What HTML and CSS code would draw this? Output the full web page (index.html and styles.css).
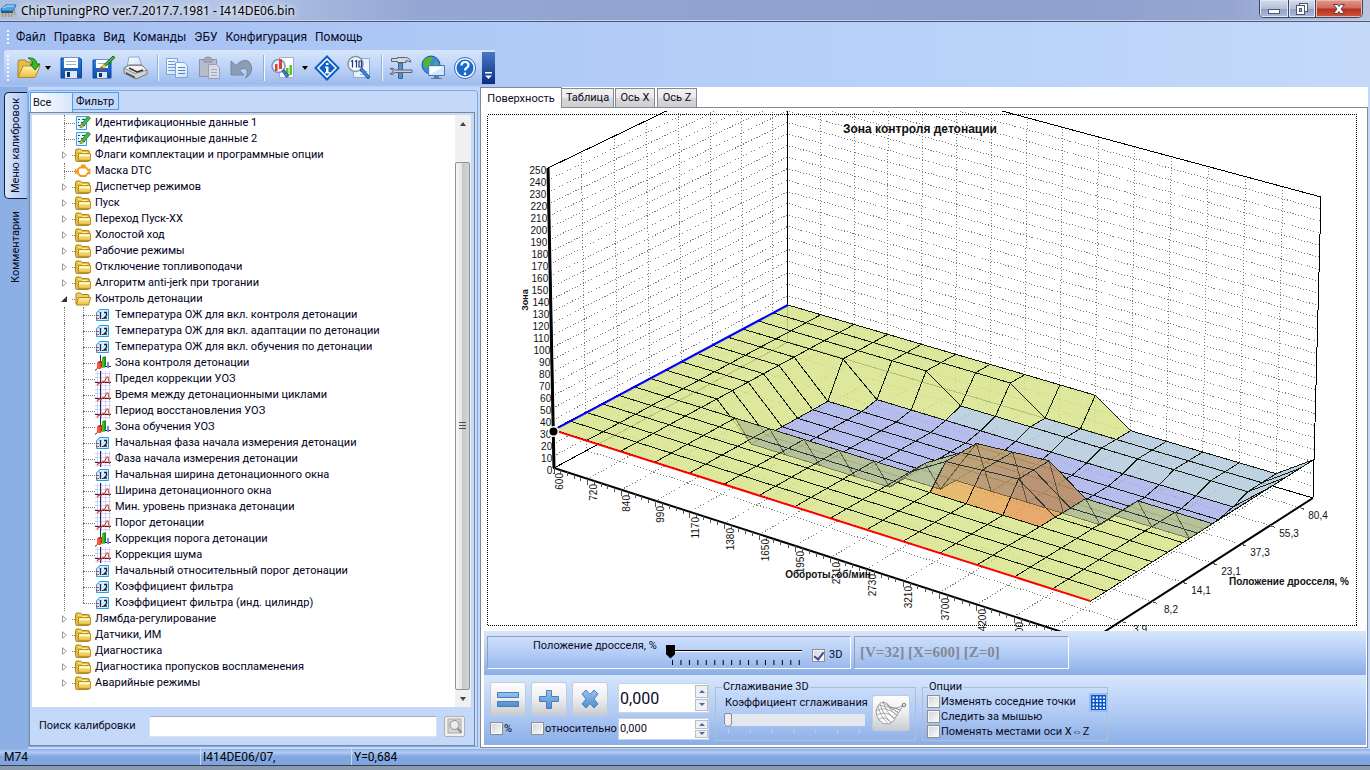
FILE: index.html
```html
<!DOCTYPE html>
<html lang="ru">
<head>
<meta charset="utf-8">
<title>ChipTuningPRO</title>
<link rel="stylesheet" href="styles.css">
</head>
<body>
<svg class="sprite" aria-hidden="true">
  <defs>
    <linearGradient id="gFold" x1="0" y1="0" x2="0" y2="1"><stop offset="0" stop-color="#fff6b4"/><stop offset="1" stop-color="#e9bd3c"/></linearGradient>
    <linearGradient id="gBlue" x1="0" y1="0" x2="0" y2="1"><stop offset="0" stop-color="#2f7fe0"/><stop offset="1" stop-color="#0b4ca8"/></linearGradient>
    <linearGradient id="gOp" x1="0" y1="0" x2="0" y2="1"><stop offset="0" stop-color="#9cc3ec"/><stop offset="1" stop-color="#4d8cd0"/></linearGradient>
    <linearGradient id="gPage" x1="0" y1="0" x2="1" y2="1"><stop offset="0" stop-color="#ffffff"/><stop offset="1" stop-color="#c9dcf6"/></linearGradient>
  </defs>
  <symbol id="folder" viewBox="0 0 16 16">
    <path d="M.5 12.500V3.500q0-1.500 1.500-1.500h3.500l1.500 1.500h6q1.500 0 1.500 1.500v8q0 1.500-1.500 1.500h-11q-1.500 0-1.500-2z" fill="#e3bc3a" stroke="#b18a1c"/>
    <path d="M2.500 4h3l1.500 1.500h5.500" fill="none" stroke="#fff3a0"/>
    <path d="M3.500 6.500h12v7h-12z" fill="url(#gFold)" stroke="#b8922a"/>
    <path d="M4.500 8.500h10" stroke="#fffbe0"/>
  </symbol>
  <symbol id="folder-open" viewBox="0 0 16 16">
    <path d="M1 13V3.500q0-1.500 1.500-1.500h3l1.500 1.500h6q1 0 1 1.500v3" fill="#f0cf62" stroke="#a67c10"/>
    <path d="M3.500 6.500h12l-2 7.500h-12z" fill="url(#gFold)" stroke="#b08a18"/>
  </symbol>
  <symbol id="num" viewBox="0 0 16 16">
    <path d="M4.500 2.500h9v11h-12v-8z" fill="#d8efff" stroke="#2b9bea"/>
    <path d="M1.500 5.500l3-3v3z" fill="#7cc4f5"/>
    <path d="M1 8.500h3M1 11.500h3" stroke="#e23b22"/>
    <path d="M5.500 5v7M9 5.500h2.500v3l-2.500 2.500h3" fill="none" stroke="#10263c" stroke-width="1.300"/>
    <path d="M7 11h1v1h-1z" fill="#10263c"/>
  </symbol>
  <symbol id="curve" viewBox="0 0 16 16">
    <path d="M2.500 0v16M6.500 0v16M10.500 0v16M14.500 0v16M0 2.500h16M0 6.500h16M0 10.500h16M0 14.500h16" stroke="#d0d2f8"/>
    <path d="M5.500 0v16M0 11.500h16" stroke="#20225c"/>
    <path d="M2 14l2-2 2 1 2-3 1.500 1 2-5h1.500l1.500 7" fill="none" stroke="#ee4a2a" stroke-width="1.200"/>
  </symbol>
  <symbol id="bars" viewBox="0 0 16 16">
    <path d="M5.500 0v11L0 15.500M5 11.500h11" fill="none" stroke="#20225c"/>
    <path d="M2 8l2-2h3v6l-1.500 2H2z" fill="#c82a12"/><path d="M2 8h3.500v6H2z" fill="#f4583a"/>
    <path d="M7 3l1.500-1.500H11V11l-1.500 1.500H7z" fill="#138a1c"/><path d="M7 3h2.500v9.500H7z" fill="#35c22e"/>
    <path d="M12 7h2v6h-2z" fill="#8488d8"/>
  </symbol>
  <symbol id="ident" viewBox="0 0 16 16">
    <path d="M1.500 1.500h10v13h-10z" fill="#e6f4ff" stroke="#3ba0ea"/>
    <path d="M3 4.500h2M7 4.500h3M3 7.500h1M6 7.500h3M3 10.500h3M8 10.500h2" stroke="#1e4a72"/>
    <path d="M5 12.500l1-3 7-8.500 2.500 2-7 8.500z" fill="#48b83a" stroke="#19761a" stroke-width=".7"/><path d="M5 12.500l1-3 2.500 2z" fill="#ffd765" stroke="#8a6a20" stroke-width=".5"/>
  </symbol>
  <symbol id="engine" viewBox="0 0 16 16">
    <path d="M3 6l2-1.500h6L13 7h1.500V5.500M14.500 5.500v6M14.500 10H13l-2.500 3h-5L3 10.500M3 5.500v6M.8 6v5M.8 8.500H3M6 2.500h4.500M8 2.500v2" fill="none" stroke="#f59a1c" stroke-width="1.800"/>
  </symbol>
</svg>

<div class="app">
  <header class="titlebar">
    <svg class="app-icon" width="17" height="17" viewBox="0 0 17 17"><path d="M1 7l5-4h10l-3 6H1z" fill="#4da6e4" stroke="#2370b4"/><path d="M3 6l4-2h7" stroke="#c6e8fb" fill="none"/><path d="M1 9h12v2H1z" fill="#1f5a8c"/><path d="M2.500 11v4M5.500 11v4M8.500 11v4M11.500 11v4M14.500 8v5" stroke="#b39a52" stroke-width="1.500"/></svg>
    <h1 class="title">ChipTuningPRO ver.7.2017.7.1981 - I414DE06.bin</h1>
    <div class="winbtns">
      <button class="wb" aria-label="Свернуть"><svg width="14" height="14" viewBox="0 0 14 14"><rect x="1.500" y="7.500" width="11" height="4" fill="#fff" stroke="#4b5670"/></svg></button>
      <button class="wb" aria-label="Развернуть"><svg width="14" height="14" viewBox="0 0 14 14"><rect x="4.500" y="1.500" width="8" height="8" fill="#fff" stroke="#4b5670"/><rect x="1.500" y="3.500" width="8" height="9" fill="#fff" stroke="#4b5670"/><rect x="4.500" y="6.500" width="2" height="3" fill="#b9c6e0" stroke="#4b5670"/></svg></button>
      <button class="wb close" aria-label="Закрыть"><svg width="14" height="14" viewBox="0 0 14 14"><path d="M1.500 2.500h4L7 4.500l1.500-2h4L9 7l3.500 4.500h-4L7 9.500l-1.500 2h-4L5 7z" fill="#fff" stroke="#5a3a4a"/></svg></button>
    </div>
  </header>

  <nav class="menubar">
    <span class="grip"></span>
    <button>Файл</button><button>Правка</button><button>Вид</button><button>Команды</button><button>ЭБУ</button><button>Конфигурация</button><button>Помощь</button>
  </nav>

  <div class="toolrow">
    <div class="toolbar">
      <span class="grip tall"></span>
      <button class="tb drop" aria-label="Открыть"><svg width="26" height="26" viewBox="0 0 26 26"><path d="M2 22V7q0-2 2-2h5l2 2h8v5" fill="#e6bd4c" stroke="#a9801f"/><path d="M2 22.500L7 11h17l-5 11.500z" fill="url(#gFold)" stroke="#b08a28"/><path d="M12 3q8-1 9 6h3l-5 6-5-6h3q0-4-5-6z" fill="#3fb52f" stroke="#1b7a1b"/></svg></button>
      <i class="arrow"></i>
      <button class="tb" aria-label="Сохранить"><svg width="26" height="26" viewBox="0 0 26 26"><path d="M3 3h19l1.500 1.500V23H3z" fill="url(#gBlue)" stroke="#0d4a9b"/><path d="M6 3h14v10H6z" fill="#fff"/><path d="M8 6.500h10M8 9.500h10" stroke="#8fb2de"/><path d="M7 16h12v7H7z" fill="#dde6f2"/><path d="M9 17h3v5H9z" fill="#13305c"/></svg></button>
      <button class="tb" aria-label="Сохранить как"><svg width="26" height="26" viewBox="0 0 26 26"><path d="M3 5h18v18H3z" fill="url(#gBlue)" stroke="#0d4a9b"/><path d="M6 5h12v8H6z" fill="#fff"/><path d="M8 8.500h7" stroke="#8fb2de"/><path d="M7 17h10v6H7z" fill="#dde6f2"/><path d="M9 18h3v4H9z" fill="#13305c"/><path d="M11 14l3-1L25 2.500 23 1 12 11.500z" fill="#46b52f" stroke="#1b6b18"/><path d="M9.500 15.500l1-4 3 2.500z" fill="#e8372a"/><path d="M12 11.500l2 2 2-2-2-2z" fill="#f3d24a"/></svg></button>
      <button class="tb" aria-label="Печать"><svg width="26" height="26" viewBox="0 0 26 26"><path d="M5 12L7 2h10l3 9z" fill="url(#gPage)" stroke="#86a9d6"/><path d="M2 13l5-3h13l5 5v4l-11 5L2 18z" fill="#d4d4d4" stroke="#777"/><path d="M2 13l11 5.500L25 15l-5-4.500H7z" fill="#f4f4f4" stroke="#888"/><path d="M7 13l8 4 6-2" stroke="#333" stroke-width="1.500" fill="none"/><path d="M4 17l9 4.500v2L4 19z" fill="#555"/></svg></button>
      <span class="sep"></span>
      <button class="tb" aria-label="Копировать"><svg width="26" height="26" viewBox="0 0 26 26"><path d="M2.500 3.500h11v16h-11z" fill="url(#gPage)" stroke="#7ea5da"/><path d="M4 6.500h7M4 9.500h7M4 12.500h7M4 15.500h7" stroke="#6b98d6"/><path d="M11.500 7.500h9l3 3v12h-12z" fill="url(#gPage)" stroke="#7ea5da"/><path d="M14 12.500h7M14 15.500h7M14 18.500h7" stroke="#5287d0"/></svg></button>
      <button class="tb" aria-label="Вставить"><svg width="26" height="26" viewBox="0 0 26 26"><path d="M3.500 4.500h17v17h-17z" fill="#b5bccb" stroke="#8c95a8"/><path d="M8 5q0-3 4-3t4 3v2H8z" fill="#a1a9b9" stroke="#8c95a8"/><path d="M12.500 9.500h8l3 3v11h-11z" fill="#d6dbe6" stroke="#98a1b4"/><path d="M15 14.500h6M15 17.500h6M15 20.500h6" stroke="#a3abbc"/></svg></button>
      <button class="tb" aria-label="Отменить"><svg width="26" height="26" viewBox="0 0 26 26"><path d="M3 6v14h13l-4.500-4.500q5-4 7.500-.500 1.500 4-1.500 8 7-4 6-11Q21.500 3 14 6q-3 1-6 4.500z" fill="#8d9cb5" stroke="#78869f"/></svg></button>
      <span class="sep"></span>
      <button class="tb" aria-label="Диаграммы"><svg width="26" height="26" viewBox="0 0 26 26"><path d="M9.500 2.500h14v20h-14z" fill="#fff" stroke="#9ab0d4"/><path d="M16 13h2.500v7H16zM19.500 10H22v10h-2.500z" fill="#54c51d"/><circle cx="8.500" cy="11" r="6.500" fill="#e2f1fd" stroke="#7d98bc" stroke-width="1.500"/><path d="M5 9h2.500v7H5zM9 4h3v10H9z" fill="#e2412b"/><path d="M12 16l2-1.500 5 6-2.500 2z" fill="#4b79bd" stroke="#2e548e"/></svg></button>
      <i class="arrow wide"></i>
      <button class="tb" aria-label="Информация"><svg width="26" height="26" viewBox="0 0 26 26"><path d="M13 1.500L24.500 13 13 24.500 1.500 13z" fill="#fff" stroke="#0e5fc0" stroke-width="2"/><path d="M13 5l8 8-8 8-8-8z" fill="#0b62c8"/><path d="M12 8h2.500v2H12zM11 11.500h3.500V17H16v1.500h-5V17h1v-4h-1z" fill="#fff"/></svg></button>
      <button class="tb" aria-label="Поиск"><svg width="26" height="26" viewBox="0 0 26 26"><path d="M7.500 3.500h16v19h-16z" fill="#e9f1fc" stroke="#8ba8d4"/><path d="M14 16.500h7M14 19.500h7" stroke="#9cb7dd"/><circle cx="9.500" cy="9" r="7.500" fill="#f4f9ff" stroke="#8a94a6" stroke-width="1.500"/><path d="M5 6.500l1.500-1v7M9 6.500l1.500-1v7M13 6h2.500v6H13z" fill="none" stroke="#1c3c78" stroke-width="1.200"/><path d="M14 15l2-2 8 9-2 2z" fill="#3d87de" stroke="#1d5aa8"/></svg></button>
      <span class="sep"></span>
      <button class="tb" aria-label="Инструменты"><svg width="26" height="26" viewBox="0 0 26 26"><path d="M3.500 3.500h6v-1h8q4 0 5.500 4.500l-5-1.500v2h-8.500v-1h-6z" fill="#d4d8de" stroke="#5a6270"/><path d="M10.500 8h4v15.500h-4z" fill="#5a8fca" stroke="#3a6494"/><path d="M2 13.500q3.500-1.500 5 1.500h17v2.500H7q-1.500 3-5 1.500l3-1.500V15z" fill="#c8cdd6" stroke="#5a6270"/></svg></button>
      <button class="tb" aria-label="Сеть"><svg width="26" height="26" viewBox="0 0 26 26"><circle cx="11" cy="10" r="9" fill="#3a8be0" stroke="#1b5ca8"/><path d="M5 4q6-4 8 0l-3 3 1 3-5 3-3-4zM15 6l4 4-2 5-3-3z" fill="#55b829"/><path d="M8.500 10.500h16v10h-16z" fill="#cfe8fd" stroke="#4b7db8"/><path d="M10 12h13L10 19z" fill="#fff"/><path d="M14 21h5v2h3v1H11v-1h3z" fill="#5a7ca8"/></svg></button>
      <button class="tb" aria-label="Справка"><svg width="26" height="26" viewBox="0 0 26 26"><circle cx="13" cy="13" r="10.500" fill="#fff" stroke="#2a69b8"/><circle cx="13" cy="13" r="8.500" fill="#1c68cf"/><path d="M9.500 10.500q0-3.500 3.500-3.500t3.500 3q0 2-2 3-1.500 1-1.500 2.500M13 17.500v2.500" fill="none" stroke="#fff" stroke-width="2.200"/></svg></button>
      <button class="overflow" aria-label="Ещё"><svg width="9" height="9" viewBox="0 0 9 9"><path d="M1 1h7v1.500H1z" fill="#fff"/><path d="M1 4.500h7L4.500 8z" fill="#fff"/></svg></button>
    </div>
  </div>

  <main class="main">
    <div class="vtabs">
      <button class="vtab active">Меню калибровок</button>
      <button class="vtab">Комментарии</button>
    </div>

    <section class="left">
      <div class="ltabs"><button class="ltab active">Все</button><button class="ltab">Фильтр</button></div>
      <div class="lbody">
        <div class="treebox">
          <ul class="tree" id="tree"></ul>
          <div class="scroll">
            <button class="sbtn" aria-label="Вверх"><i class="up"></i></button>
            <div class="sgap"></div>
            <div class="thumb"><i></i></div>
            <button class="sbtn low" aria-label="Вниз"><i class="down"></i></button>
          </div>
        </div>
        <div class="search">
          <label for="q">Поиск калибровки</label>
          <input id="q" type="text">
          <button aria-label="Найти"><svg width="16" height="16" viewBox="0 0 16 16"><rect x="1" y="1" width="13" height="14" fill="#d6d6d6" stroke="#aaa"/><circle cx="7.500" cy="7" r="4.500" fill="#ececec" stroke="#8d8d8d"/><path d="M10.500 10.500l4 4" stroke="#8d8d8d" stroke-width="2"/></svg></button>
        </div>
      </div>
    </section>

    <section class="right">
      <div class="rtabs"><button class="rtab active">Поверхность</button><button class="rtab">Таблица</button><button class="rtab">Ось X</button><button class="rtab">Ось Z</button></div>
      <div class="rbody">
        <div class="chart"><svg id="chart" viewBox="484 111 878 520" preserveAspectRatio="xMinYMin meet"></svg></div>
        <div class="bar1">
          <div class="well throttle">
            <label for="thr">Положение дросселя, %</label>
            <div class="slider">
              <input id="thr" type="range" min="0" max="15" value="0">
              <svg width="132" height="5" viewBox="0 0 132 5"><path d="M1 2.500h131" stroke="#000" stroke-width="5" stroke-dasharray="1 7.450"/></svg>
            </div>
            <label class="chk"><input type="checkbox" checked>3D</label>
          </div>
          <div class="well readout">[V=32] [X=600] [Z=0]</div>
        </div>
        <div class="bar2">
          <div class="ops">
            <div class="opbtns">
              <button class="op" aria-label="Присвоить"><svg width="24" height="24" viewBox="0 0 24 24"><path d="M1.500 5.500h21v5h-21zM1.500 14.500h21v5h-21z" fill="url(#gOp)" stroke="#4c7fb8"/></svg></button>
              <button class="op" aria-label="Прибавить"><svg width="24" height="24" viewBox="0 0 24 24"><path d="M9.500 3.500h5v6h7v5h-7v7h-5v-7h-7v-5h7z" fill="url(#gOp)" stroke="#4c7fb8"/></svg></button>
              <button class="op" aria-label="Умножить"><svg width="24" height="24" viewBox="0 0 24 24"><path d="M4 7l4-4 4 4.500L16 3l4 4-4 5 4 5-4 4-4-4.500L8 21l-4-4 4-5z" fill="url(#gOp)" stroke="#4c7fb8"/></svg></button>
            </div>
            <div class="opchk"><label class="chk pc"><input type="checkbox">%</label><label class="chk"><input type="checkbox">относительно</label></div>
          </div>
          <div class="spins">
            <div class="spin big"><input type="text" value="0,000" aria-label="Значение"><span class="ud"><button aria-label="Больше"><i class="up"></i></button><button aria-label="Меньше"><i class="down"></i></button></span></div>
            <div class="spin"><input type="text" value="0,000" aria-label="Шаг"><span class="ud"><button aria-label="Больше"><i class="up"></i></button><button aria-label="Меньше"><i class="down"></i></button></span></div>
          </div>
          <fieldset class="smooth">
            <legend>Сглаживание 3D</legend>
            <div class="smoothcol">
              <label for="sm">Коэффициент сглаживания</label>
              <input id="sm" type="range" min="0" max="6" value="0">
              <svg width="140" height="4" viewBox="0 0 140 4"><path d="M4 2h136" stroke="#c3cde0" stroke-width="4" stroke-dasharray="1 20.800"/></svg>
            </div>
            <button class="op tall" aria-label="Сгладить"><svg width="34" height="26" viewBox="0 0 34 26"><path d="M2 11q2-8 7-9 4 0 7 5 7 3 13-2-3 6-6 10-3 7-8 9-6 1-10-4-3-4-3-9z" fill="#fff" stroke="#777" stroke-width=".7"/><path d="M4 6q2 10 10 17.500M6 3.500q2 10 11 19M9 2q3 10 11 17M13 3.500q4 7 9 12M17 7q3 3 7 6M22 8q2 2 4 2M2 11q9-6 21 4M3 15q8-5 18 3M5 19q6-4 12 4M5 5q9 1 19 7M8 2.500q8 6 18 7" fill="none" stroke="#888" stroke-width=".7"/><circle cx="30" cy="5" r="1.800" fill="#ddd" stroke="#666" stroke-width=".8"/></svg></button>
          </fieldset>
          <fieldset class="opts">
            <legend>Опции</legend>
            <div class="optcol">
              <label class="chk"><input type="checkbox">Изменять соседние точки</label>
              <label class="chk"><input type="checkbox">Следить за мышью</label>
              <label class="chk"><input type="checkbox">Поменять местами оси X⇔Z</label>
            </div>
            <button class="gridbtn" aria-label="Сетка"><svg width="15" height="15" viewBox="0 0 15 15"><path d="M0 0h15v15H0z" fill="#0a55c4"/><path d="M1.500 1.500h2v2h-2zM5 1.500h2v2H5zM8.500 1.500h2v2h-2zM12 1.500h2v2h-2zM1.500 5h2v2h-2zM5 5h2v2H5zM8.500 5h2v2h-2zM12 5h2v2h-2zM1.500 8.500h2v2h-2zM5 8.500h2v2H5zM8.500 8.500h2v2h-2zM12 8.500h2v2h-2zM1.500 12h2v2h-2zM5 12h2v2H5zM8.500 12h2v2h-2zM12 12h2v2h-2z" fill="#e8f2ff"/></svg></button>
          </fieldset>
        </div>
      </div>
    </section>
  </main>

  <footer class="status"><span class="cell c1">M74</span><span class="cell c2">I414DE06/07,</span><span class="cell c3">Y=0,684</span></footer>
  <div class="taskedge"></div>
</div>
<script src="app.js"></script>
</body>
</html>
```

FILE: styles.css
```css
* { box-sizing: border-box; }
html, body { height: 100%; margin: 0; }
body {
  font: 11px/16px Roboto, "Noto Sans", sans-serif;
  color: #0a0a1e;
  background: #8cafe6;
  overflow: hidden;
}
button, input { font: inherit; color: inherit; padding: 0; margin: 0; border: 0; background: none; }
ul { list-style: none; margin: 0; padding: 0; }
.sprite { position: absolute; width: 0; height: 0; }
.app { display: flex; flex-direction: column; height: 100vh; }

.titlebar {
  display: flex; align-items: center; height: 22px; flex: none;
  background: linear-gradient(90deg, #aebfe2 0, #b4c4e6 230px, #94a6d3 420px, #8f9fce 75%, #96a6d2 90%, #b9c6e0);
  border-bottom: 1px solid #4c5878;
  box-shadow: inset 0 -1px #c7d3ec;
}
.app-icon { margin-right: 4px; }
.title { margin: 0; font: 12px/16px "Noto Sans", sans-serif; color: #000; flex: 1; text-shadow: 0 0 6px #fff, 0 0 8px #fff; }
.winbtns { display: flex; align-self: flex-start; height: 18px; margin-right: 7px; border: 1px solid #3d4864; border-top: 0; border-radius: 0 0 5px 5px; overflow: hidden; }
.wb { display: flex; align-items: center; justify-content: center; width: 28px; background: linear-gradient(#d5dcec, #b4bfd9 50%, #909fc5 52%, #aebbd9); box-shadow: inset 0 0 0 1px #dfe6f4; }
.wb + .wb { border-left: 1px solid #3d4864; width: 27px; }
.wb.close { width: 47px; background: linear-gradient(#dd9a8f, #cf6a58 48%, #b3301c 52%, #d4563a); box-shadow: inset 0 0 0 1px #e9b7a8; }

.menubar, .toolrow { background: linear-gradient(90deg, #a4c0f3, #b6d0f8 60%, #c4d9fa); }
.menubar { display: flex; align-items: center; gap: 8px; height: 28px; flex: none; padding: 2px 0 0 7px; font-size: 12px; }
.grip { width: 2px; height: 14px; margin-right: -1px; background: repeating-linear-gradient(#f4f8ff 0 2px, transparent 2px 4px); }
.grip.tall { height: 26px; margin-right: 5px; }
.toolrow { height: 37px; flex: none; padding-left: 4px; }
.toolbar { display: flex; align-items: center; width: 491px; height: 35px; padding-left: 3px; border-radius: 3px 0 0 3px; background: linear-gradient(#d8e6fc, #bcd2f7 50%, #9dbaec); }
.tb { display: flex; align-items: center; justify-content: center; width: 32px; height: 30px; flex: none; }
.tb.drop { width: 29px; }
.arrow { border: 3px solid transparent; border-top: 4px solid #000; border-bottom: 0; margin: 0 4px 0 2px; }
.arrow.wide { margin: 0 3px; }
.sep { width: 2px; height: 26px; margin: 0 2px 0 6px; border-left: 1px solid #8faede; background: #f4f8ff; flex: none; }
.overflow { display: flex; align-items: flex-end; justify-content: center; width: 13px; height: 32px; margin-left: auto; padding-bottom: 4px; background: linear-gradient(#4878c4, #0b2f80); }

.main { display: flex; flex: 1; min-height: 0; background: #c2d8fa; }
.vtabs { display: flex; flex-direction: column; width: 28px; flex: none; padding: 5px 0 0 4px; background: #8cafe6; }
.vtab { writing-mode: vertical-rl; transform: rotate(180deg); width: 23px; height: 96px; text-align: center; line-height: 22px; }
.vtab.active { height: 107px; border: 1px solid #12203c; border-left: 0; border-radius: 0 5px 5px 0; background: linear-gradient(90deg, #a9c5f3, #d9e7fc); }

.left { display: flex; flex-direction: column; width: 450px; flex: none; margin: 3px 2px 2px 0; border: 1px solid #7fa9e4; border-radius: 3px 3px 0 0; background: #c4d8fa; }
.ltabs { display: flex; height: 21px; padding-left: 1px; flex: none; }
.ltab { width: 47px; height: 18px; margin-top: 1px; padding: 0 3px; background: #c4d8fa; border: 1px solid #4a9bf2; line-height: 15px; text-align: left; margin-left: -1px; }
.ltab.active { width: 43px; height: 20px; margin-left: 0; padding: 0 2px; line-height: 20px; border-bottom: 0; background: linear-gradient(90deg, #fff, #d8e6fc); }
.lbody { display: flex; flex-direction: column; flex: 1; min-height: 0; margin-right: 2px; border: 1px solid #7c8798; padding: 2px 3px 0 2px; }
.treebox { display: flex; flex: 1; min-height: 0; background: #fff; }
.tree { flex: 1; min-width: 0; overflow: hidden; }
.row { display: flex; align-items: center; height: 16px; white-space: nowrap; color: #00001e; }
.row svg { width: 16px; height: 16px; flex: none; }
.g { flex: none; height: 16px; }
.g0 { width: 24px; }
.gv { width: 8px; }
.gl { width: 8px; border-left: 1px dotted #777; }
.gap { width: 11px; }
.gx { width: 16px; display: flex; align-items: center; justify-content: center; }
.tri { border: 4px solid transparent; border-right: 0; border-left: 5px solid #9a9a9a; position: relative; }
.tri::after { content: ""; position: absolute; left: -4px; top: -2px; border: 2px solid transparent; border-right: 0; border-left: 3px solid #fff; }
.tri.open { border: 0; border-left: 6px solid transparent; border-bottom: 6px solid #333; }
.tri.open::after { display: none; }
.dots { height: 1px; border-top: 1px dotted #777; flex: none; }
.d3 { width: 3px; }
.d11 { width: 11px; margin-left: -8px; }
.d10 { width: 12px; margin-left: -8px; }
.half { height: 8px; align-self: flex-start; }
.row span.t { padding-left: 4px; }
.row.lv2 span.t { padding-left: 4px; }

.scroll { display: flex; flex-direction: column; width: 16px; background: #f0f0f0; }
.sbtn, .ud button { display: flex; align-items: center; justify-content: center; }
.sbtn { height: 17px; flex: none; }
.sgap { height: 30px; flex: none; }
.thumb { flex: 1; display: flex; align-items: center; justify-content: center; margin-right: 1px; border: 1px solid #8f9296; border-radius: 2px; background: linear-gradient(90deg, #f6f6f6, #e4e5e7 45%, #c6c8cc 50%, #d2d4d8); }
.thumb i { width: 7px; height: 8px; background: repeating-linear-gradient(#4d4d4d 0 1px, transparent 1px 3px); }
.up, .down { border: 3px solid transparent; border-bottom: 4px solid #444; border-top: 0; }
.down { border-bottom: 0; border-top: 4px solid #444; }

.search { display: flex; align-items: center; height: 38px; padding: 0 6px 0 7px; flex: none; }
.search label { width: 110px; }
.search input { flex: 1; min-width: 0; height: 21px; background: #fff; border: 1px solid #dbe3ee; border-top-color: #a9afb9; border-radius: 2px; padding: 0 3px; }
.search button { width: 21px; height: 21px; margin-left: 7px; border: 1px solid #b0b0b0; border-radius: 2px; background: #f1f1f1; display: flex; align-items: center; justify-content: center; }

.right { display: flex; flex-direction: column; flex: 1; min-width: 0; background: #fff; margin: 0 2px 1px 0; border-left: 1px solid #84899a; }
.rtabs { display: flex; align-items: flex-end; height: 21px; flex: none; padding-right: 1px; border-bottom: 1px solid #84899a; }
.rtab { width: 40px; height: 19px; margin-right: 2px; border: 1px solid #84899a; border-bottom: 0; background: linear-gradient(#f2f2f2, #e9e9e9 48%, #d8d8d8 50%, #cfcfcf); }
.rtab.active { width: 81px; height: 21px; margin: 0 0 -1px; border-left: 0; background: #fff; line-height: 19px; }
.rtab.active + .rtab { width: 52px; border-left: 0; margin-right: 1px; }
.rbody { display: flex; flex-direction: column; flex: 1; min-height: 0; padding: 3px 1px 2px 3px; border-right: 1px solid #84899a; border-bottom: 1px solid #84899a; }
.chart { flex: 1; min-height: 0; overflow: hidden; }
.chart svg { display: block; width: 100%; height: 100%; }
.chart text { font-family: "Liberation Sans", Arial, sans-serif; fill: #111; }
.grid { fill: none; stroke: #7c7c7c; stroke-width: 1; stroke-dasharray: 1 2; }
.face { stroke: #181c10; stroke-width: 1; stroke-linejoin: round; }

.bar1, .bar2 { background: linear-gradient(#d6e6fc, #b4cdf6 50%, #8aaee6); flex: none; display: flex; }
.bar1 { height: 44px; padding: 5px 3px 0; gap: 3px; }
.well { height: 33px; border: 1px solid; border-color: #9a9ea8 #fff #fff #9a9ea8; display: flex; }
.throttle { width: 364px; padding-left: 45px; }
.throttle > label:first-child { width: 133px; margin-top: 1px; }
.slider { width: 140px; padding-top: 7px; display: flex; flex-direction: column; gap: 1px; }
.slider svg { margin-left: 5px; }
.slider input { appearance: none; width: 136px; height: 15px; background: linear-gradient(#000 0 1px, #fff 1px 2px) 8px 6px / 100% 2px no-repeat; }
.slider input::-webkit-slider-thumb { appearance: none; width: 9px; height: 14px; border: 0; background: #000; clip-path: polygon(0 0, 100% 0, 100% 70%, 50% 100%, 0 70%); }
.throttle .chk { margin: 10px 0 0 6px; height: 16px; gap: 4px; }
.chk { display: flex; align-items: center; gap: 2px; height: 15px; white-space: nowrap; }
.chk input { appearance: none; width: 13px; height: 13px; flex: none; background: linear-gradient(135deg, #cfd3da, #fbfbfb); border: 1px solid #8e8f8f; box-shadow: inset 0 0 0 1px #f6f6f6; }
.chk input:checked { position: relative; }
.chk input:checked::after { content: ""; position: absolute; left: 3px; top: 0; width: 4px; height: 8px; border: solid #3a4a98; border-width: 0 2px 2px 0; transform: rotate(38deg); }
.readout { width: 215px; padding-left: 5px; color: #828894; font: bold 15px/31px "Liberation Serif", "Times New Roman", serif; }

.bar2 { height: 70px; padding: 7px 5px 0 6px; }
.ops { width: 128px; }
.opbtns { display: flex; gap: 5px; height: 34px; }
.op { display: flex; align-items: center; justify-content: center; width: 36px; height: 34px; border: 1px solid #c4cbd6; border-radius: 3px; background: linear-gradient(#fdfdfe, #eceef1 50%, #c8cbd0); }
.opchk { display: flex; gap: 13px; margin-top: 5px; }
.pc { width: 28px; }
.opchk .chk { gap: 1px; }
.spins { width: 91px; display: flex; flex-direction: column; gap: 5px; padding-top: 1px; }
.spin { display: flex; height: 22px; background: #fff; border: 1px solid #c9d3e4; }
.spin input { flex: 1; min-width: 0; padding-left: 1px; }
.spin.big { height: 30px; }
.spin.big input { font-size: 16px; }
.ud { width: 13px; display: flex; flex-direction: column; gap: 1px; padding: 1px 0; }
.ud button { flex: 1; min-height: 0; border: 1px solid #b9bec8; background: #eef0f3; }
.ud .up { border-width: 0 3px 3px; border-bottom-color: #4c66a8; }
.ud .down { border-width: 3px 3px 0; border-top-color: #4c66a8; }
fieldset { margin: -1px 0 0; padding: 0; border: 1px solid #b4bdcc; height: 60px; min-width: 0; display: flex; }
legend { padding: 0 1px; margin-left: 5px; line-height: 12px; }
.smooth legend { margin-left: -2px; }
.smooth { width: 201px; margin-left: 6px; padding-left: 8px; justify-content: space-between; padding-right: 5px; }
.smoothcol { display: flex; flex-direction: column; width: 142px; }
.smoothcol label { white-space: nowrap; height: 18px; padding: 0 1px; margin-top: 2px; }
.smoothcol input { appearance: none; height: 14px; background: linear-gradient(#e4e8ee, #e4e8ee) 0 1px / 100% 12px no-repeat; margin: 0; width: 141px; }
.smoothcol input::-webkit-slider-thumb { appearance: none; width: 8px; height: 14px; border: 1px solid #858b95; border-radius: 2px 2px 4px 4px; background: #eceff3; }
.smoothcol svg { margin-top: 2px; }
.op.tall { width: 38px; height: 36px; margin-top: 2px; }
.opts { width: 186px; margin-left: 6px; padding-left: 4px; }
.opts legend { margin-left: 1px; }
.optcol { flex: 1; margin-top: 1px; }
.optcol .chk { gap: 1px; }
.gridbtn { width: 19px; height: 19px; margin-right: 9px; flex: none; display: flex; align-items: center; justify-content: center; background: #9cbdf0; }

.status { display: flex; align-items: center; height: 17px; flex: none; font-size: 12px; color: #000; background: linear-gradient(#8cafe6, #b4cdf4 20%, #84a9e2 45%, #7ea4de); border-bottom: 1px solid #33405c; }
.cell { padding-left: 2px; margin-left: 2px; line-height: 16px; }
.cell + .cell { border-left: 1px solid #c6d8f5; margin-left: 0; }
.c1 { width: 198px; }
.c2 { width: 151px; }
.taskedge { height: 4px; flex: none; background: #8d99ad; }
```

FILE: app.js
```js
// Tree: [level, icon, caption]
const items = [
  [1, 'ident', 'Идентификационные данные 1'],
  [1, 'ident', 'Идентификационные данные 2'],
  [1, 'folder', 'Флаги комплектации и программные опции'],
  [1, 'engine', 'Маска DTC'],
  [1, 'folder', 'Диспетчер режимов'],
  [1, 'folder', 'Пуск'],
  [1, 'folder', 'Переход Пуск-ХХ'],
  [1, 'folder', 'Холостой ход'],
  [1, 'folder', 'Рабочие режимы'],
  [1, 'folder', 'Отключение топливоподачи'],
  [1, 'folder', 'Алгоритм anti-jerk при трогании'],
  [1, 'folder-open', 'Контроль детонации'],
  [2, 'num', 'Температура ОЖ для вкл. контроля детонации'],
  [2, 'num', 'Температура ОЖ для вкл. адаптации по детонации'],
  [2, 'num', 'Температура ОЖ для вкл. обучения по детонации'],
  [2, 'bars', 'Зона контроля детонации'],
  [2, 'curve', 'Предел коррекции УОЗ'],
  [2, 'curve', 'Время между детонационными циклами'],
  [2, 'curve', 'Период восстановления УОЗ'],
  [2, 'bars', 'Зона обучения УОЗ'],
  [2, 'num', 'Начальная фаза начала измерения детонации'],
  [2, 'curve', 'Фаза начала измерения детонации'],
  [2, 'num', 'Начальная ширина детонационного окна'],
  [2, 'curve', 'Ширина детонационного окна'],
  [2, 'curve', 'Мин. уровень признака детонации'],
  [2, 'curve', 'Порог детонации'],
  [2, 'bars', 'Коррекция порога детонации'],
  [2, 'curve', 'Коррекция шума'],
  [2, 'num', 'Начальный относительный порог детонации'],
  [2, 'num', 'Коэффициент фильтра'],
  [2, 'num', 'Коэффициент фильтра (инд. цилиндр)'],
  [1, 'folder', 'Лямбда-регулирование'],
  [1, 'folder', 'Датчики, ИМ'],
  [1, 'folder', 'Диагностика'],
  [1, 'folder', 'Диагностика пропусков воспламенения'],
  [1, 'folder', 'Аварийные режимы']
];
document.getElementById('tree').innerHTML = items.map(([lv, icon, text], n) => {
  let guide;
  if (lv === 2) {
    const last = items[n + 1][0] === 1;
    guide = '<i class="g gv"></i><i class="g gl"></i><i class="g gap"></i>' +
      `<i class="g gl${last ? ' half' : ''}"></i><i class="dots d10"></i>`;
  } else if (icon.startsWith('folder')) {
    guide = `<i class="g gx"><i class="tri${icon === 'folder-open' ? ' open' : ''}"></i></i><i class="dots d3"></i>`;
  } else {
    guide = '<i class="g gv"></i><i class="g gl"></i><i class="dots d11"></i>';
  }
  return `<li class="row lv${lv}"><i class="g g0"></i>${guide}<svg><use href="#${icon}"/></svg><span class="t">${text}</span></li>`;
}).join('');

// Perspective map of the unit square onto a quad: front-left, front-right, back-right, back-left
function plane([p0, p1, p2, p3]) {
  const dx1 = p1[0] - p2[0], dy1 = p1[1] - p2[1], dx2 = p3[0] - p2[0], dy2 = p3[1] - p2[1];
  const sx = p0[0] - p1[0] + p2[0] - p3[0], sy = p0[1] - p1[1] + p2[1] - p3[1];
  const den = dx1 * dy2 - dx2 * dy1;
  const g = (sx * dy2 - dx2 * sy) / den, h = (dx1 * sy - sx * dy1) / den;
  const a = p1[0] - p0[0] + g * p1[0], b = p3[0] - p0[0] + h * p3[0];
  const d = p1[1] - p0[1] + g * p1[1], e = p3[1] - p0[1] + h * p3[1];
  return (u, w) => {
    const k = g * u + h * w + 1;
    return [(a * u + b * w + p0[0]) / k, (d * u + e * w + p0[1]) / k];
  };
}
const N = 15, MAX = 250;
const floor = plane([[554, 468], [1090, 641], [1313, 498], [788, 342]]);
const roof = plane([[548, 168], [1095, 329], [1321, 197], [787, 53]]);
const pt = (i, j, v) => {
  const f = floor(i / N, j / N), r = roof(i / N, j / N), t = v / MAX;
  return [f[0] + (r[0] - f[0]) * t, f[1] + (r[1] - f[1]) * t];
};
const xy = p => p[0].toFixed(1) + ' ' + p[1].toFixed(1);
const path = (...ps) => 'M' + ps.map(xy).join('L');

// Zone values: first low row and last low row for each speed column
const from = [0, 0, 0, 6, 6, 6, 6, 6, 7, 8, 8, 8, 8, 9, 9];
const to = [0, 0, 0, 11, 12, 12, 13, 13, 14, 14, 15, 15, 15, 15, 15];
const value = (i, j) => {
  if (i >= 9 && i <= 11 && j >= 5 && j <= 7) return 50 + (i - 9) * 2;
  if (i < 3 || i > 14 || j < from[i] || j > to[i]) return 32;
  if (j >= 13) return 11;
  return j === 12 ? 6 : 3;
};
const colour = v => v > 53 ? '#e09a50' : v > 51 ? '#e2a552' : v > 40 ? '#e2ae55' : v > 20 ? '#d6e48a' : v > 8 ? '#b2c9dc' : '#a8b0e8';

let out = '', grid = '';
for (let v = 10; v <= MAX; v += 10) grid += path(pt(0, 0, v), pt(0, N, v), pt(N, N, v));
for (let i = 1; i < N; i++) grid += path(pt(i, 0, 0), pt(i, N, 0), pt(i, N, MAX));
for (let j = 2; j < N; j += 2) grid += path(pt(N, j, 0), pt(0, j, 0), pt(0, j, MAX));
out += `<path class="grid" shape-rendering="crispEdges" d="${grid}"/>`;
out += `<path d="${path(pt(0, 0, MAX), pt(0, N, MAX), pt(N, N, MAX), pt(N, N, 0), pt(0, N, 0), pt(0, 0, 0))}${path(pt(0, N, 0), pt(0, N, MAX))}" fill="none" stroke="#000" shape-rendering="crispEdges"/>`;

let front = '', back = '';
for (let j = N - 1; j >= 0; j--) {
  for (let i = 0; i < N; i++) {
    const q = [pt(i, j, value(i, j)), pt(i + 1, j, value(i + 1, j)), pt(i + 1, j + 1, value(i + 1, j + 1)), pt(i, j + 1, value(i, j + 1))];
    const area = q.reduce((s, p, n) => s + p[0] * q[(n + 1) % 4][1] - q[(n + 1) % 4][0] * p[1], 0);
    const d = path(...q) + 'Z';
    if (area > 0) back += `<path d="${d}" fill="#6474a0" fill-opacity=".26" stroke="#2a2c10" stroke-opacity=".4"/>`;
    else front += `<path class="face" d="${d}" fill="${colour(value(i, j + 1))}" fill-opacity=".84"/>`;
  }
}
out += `<g shape-rendering="crispEdges">${front}${back}</g>`;

// Axes, ticks and edge highlights
out += `<path d="${path(pt(0, 0, MAX), pt(0, 0, 0), pt(N, 0, 0), pt(N, N, 0))}" fill="none" stroke="#000" stroke-width="2"/>`;
out += `<path d="${path(pt(0, 0, MAX), pt(0, 0, 0))}" fill="none" stroke="#000" stroke-width="3"/>`;
let ticks = '';
for (let k = 0; k <= N * 5; k++) {
  const p = pt(k / 5, 0, 0);
  ticks += `M${xy(p)}v${k % 5 ? 4 : 6}`;
}
for (let k = 2; k < N; k += 2) ticks += `M${xy(pt(N, k, 0))}l5 2`;
out += `<path d="${ticks}" stroke="#555" shape-rendering="crispEdges"/>`;

for (let v = 0; v <= MAX; v += 10) {
  const p = pt(0, 0, v);
  out += `<text x="${(p[0] + 1).toFixed(0)}" y="${(p[1] + 6).toFixed(0)}" font-size="10" text-anchor="end">${v}.</text>`;
}
const s = pt(0, 0, 32);
out += `<path d="${path([s[0] + 5, s[1] - 2], pt(0, N, 32))}" stroke="#0000ff" stroke-width="2"/>`;
out += `<path d="${path([s[0] + 5, s[1] + 2], pt(N, 0, 32))}" stroke="#ff0000" stroke-width="2"/>`;
out += `<circle cx="553.500" cy="431.500" r="5.500" fill="#fff"/><circle cx="553.500" cy="431.500" r="4" fill="#000"/>`;

[600, 720, 840, 990, 1170, 1380, 1650, 1950, 2310, 2730, 3210, 3700, 4200, 5000].forEach((t, i) => {
  const p = pt(i, 0, 0);
  out += `<text transform="translate(${(p[0] + 9).toFixed(0)} ${(p[1] + 5).toFixed(0)}) rotate(-90)" font-size="10" text-anchor="end">${t}</text>`;
});
['3,9', '8,2', '14,1', '23,1', '37,3', '55,3', '80,4'].forEach((t, k) => {
  const p = pt(N, 2 * k + 2, 0);
  out += `<text x="${(p[0] + 19).toFixed(0)}" y="${(p[1] + 12).toFixed(0)}" font-size="10" text-anchor="middle">${t}</text>`;
});
out += '<text x="920" y="133" font-size="12" font-weight="bold" text-anchor="middle">Зона контроля детонации</text>';
out += '<text x="828" y="578" font-size="10" font-weight="bold" text-anchor="middle">Обороты, об/мин</text>';
out += '<text x="1289" y="585" font-size="10" font-weight="bold" text-anchor="middle">Положение дросселя, %</text>';
out += '<text transform="translate(528 300) rotate(-90)" font-size="9" font-weight="bold" text-anchor="middle">Зона</text>';
out += '<rect x="487.500" y="114.500" width="869" height="511" fill="none" stroke="#000" stroke-dasharray="1 1" shape-rendering="crispEdges"/>';
document.getElementById('chart').innerHTML = out;
```
